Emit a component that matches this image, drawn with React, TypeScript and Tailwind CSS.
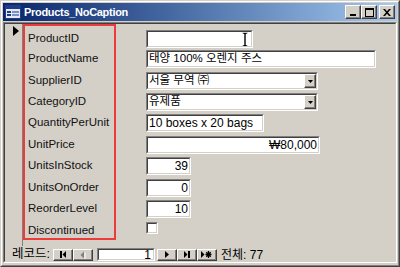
import React from "react";

const raised =
  "border border-t-white border-l-white border-r-[#404040] border-b-[#404040] shadow-[inset_-1px_-1px_#808080] bg-[#d4d0c8]";

function Box({ w, children, right }: { w: string; children?: React.ReactNode; right?: boolean }) {
  return (
    <div className={`${w} h-[18px] bg-white border border-t-[#808080] border-l-[#808080] border-r-white border-b-white`}>
      <div
        className={`h-full w-full flex items-center border border-t-[#404040] border-l-[#404040] border-r-[#d4d0c8] border-b-[#d4d0c8] px-[1px] ${
          right ? "justify-end" : "justify-start"
        }`}
      >
        {children}
      </div>
    </div>
  );
}

function Combo({ text }: { text: string }) {
  return (
    <div className="w-[172px] h-[18px] bg-white border border-t-[#808080] border-l-[#808080] border-r-white border-b-white">
      <div className="h-full w-full flex items-center border border-t-[#404040] border-l-[#404040] border-r-[#d4d0c8] border-b-[#d4d0c8] pl-[1px]">
        <span className="flex-1 text-[11.5px]">{text}</span>
        <div className={`w-[12px] h-[14px] flex items-center justify-center ${raised}`}>
          <svg width="5" height="3" viewBox="0 0 5 3">
            <path d="M0 0h5L2.5 3z" fill="#000" />
          </svg>
        </div>
      </div>
    </div>
  );
}

function TitleIcon() {
  return (
    <svg width="16" height="14" viewBox="0 0 16 14">
      <rect x="0.5" y="0.5" width="15" height="13" fill="#e8e8f0" stroke="#1c3c8c" />
      <rect x="1" y="1" width="14" height="3" fill="#1c3c8c" />
      <rect x="2" y="6" width="4" height="2" fill="#1c3c8c" />
      <rect x="7" y="6" width="7" height="2" fill="#7890c8" />
      <rect x="2" y="9" width="4" height="2" fill="#1c3c8c" />
      <rect x="7" y="9" width="7" height="2" fill="#7890c8" />
    </svg>
  );
}

function TBtn({ children }: { children: React.ReactNode }) {
  return <div className={`w-[16px] h-[14px] flex items-center justify-center ${raised}`}>{children}</div>;
}

function NavBtn({ children }: { children: React.ReactNode }) {
  return <div className={`w-[20px] h-[12px] flex items-center justify-center ${raised}`}>{children}</div>;
}

const rows: { label: string; h: string; field: React.ReactNode }[] = [
  {
    label: "ProductID",
    h: "h-[20px]",
    field: (
      <Box w="w-[107px]" right>
        <svg width="6" height="15" viewBox="0 0 6 15" className="mr-[2px]">
          <path d="M0.5 0.5h5v1.5h-1.5v11h1.5v1.5h-5v-1.5h1.5v-11h-1.5z" fill="#000" stroke="#fff" strokeWidth="0.6" />
        </svg>
      </Box>
    ),
  },
  { label: "ProductName", h: "h-[22px]", field: <Box w="w-[230px]"><span className="text-[11.5px]">태양 100% 오렌지 주스</span></Box> },
  { label: "SupplierID", h: "h-[21px]", field: <Combo text="서울 무역 ㈜" /> },
  { label: "CategoryID", h: "h-[21px]", field: <Combo text="유제품" /> },
  { label: "QuantityPerUnit", h: "h-[22px]", field: <Box w="w-[118px]"><span>10 boxes x 20 bags</span></Box> },
  { label: "UnitPrice", h: "h-[21px]", field: <Box w="w-[174px]" right><span>₩80,000</span></Box> },
  { label: "UnitsInStock", h: "h-[22px]", field: <Box w="w-[45px]" right><span>39</span></Box> },
  { label: "UnitsOnOrder", h: "h-[21px]", field: <Box w="w-[45px]" right><span>0</span></Box> },
  { label: "ReorderLevel", h: "h-[22px]", field: <Box w="w-[45px]" right><span>10</span></Box> },
  {
    label: "Discontinued",
    h: "h-[20px]",
    field: (
      <div className="w-[12px] h-[12px] bg-white border border-t-[#808080] border-l-[#808080] border-r-white border-b-white">
        <div className="w-full h-full border border-t-[#404040] border-l-[#404040] border-r-[#d4d0c8] border-b-[#d4d0c8]" />
      </div>
    ),
  },
];

export default function App() {
  return (
    <div className="w-[400px] h-[267px] flex font-['Liberation_Sans','Noto_Sans_CJK_KR',sans-serif] text-black text-[12px] leading-none border border-t-[#d4d0c8] border-l-[#d4d0c8] border-r-[#404040] border-b-[#404040] bg-[#d4d0c8]">
      <div className="flex-1 flex border border-t-white border-l-white border-r-[#808080] border-b-[#808080]">
        <div className="flex-1 flex flex-col p-[1px] pb-[2px]">
          {/* title bar */}
          <div className="h-[18px] flex items-center bg-gradient-to-r from-[#0a246a] to-[#a6caf0] pl-[2px] pr-[2px]">
            <TitleIcon />
            <span className="ml-[3px] text-white font-bold text-[11px] tracking-[-0.3px]">Products_NoCaption</span>
            <div className="flex-1" />
            <TBtn>
              <svg width="8" height="8" viewBox="0 0 8 8">
                <rect x="1" y="6" width="6" height="2" fill="#000" />
              </svg>
            </TBtn>
            <TBtn>
              <svg width="9" height="9" viewBox="0 0 9 9">
                <path d="M0 0h9v9H0z M1 2v6h7V2z" fill="#000" fillRule="evenodd" />
              </svg>
            </TBtn>
            <div className="w-[2px]" />
            <TBtn>
              <svg width="8" height="7" viewBox="0 0 8 7">
                <path d="M0 0h2l2 2.2L6 0h2L5 3.5 8 7H6L4 4.8 2 7H0l3-3.5z" fill="#000" />
              </svg>
            </TBtn>
          </div>
          {/* client */}
          <div className="mt-[1px] flex-1 flex flex-col border border-t-[#808080] border-l-[#808080] border-r-white border-b-white">
            <div className="flex-1 flex flex-col border border-t-[#404040] border-l-[#404040] border-r-[#d4d0c8] border-b-[#d4d0c8]">
              <div className="h-[222px] flex">
                {/* record selector */}
                <div className="w-[18px] border-r border-r-[#808080] flex justify-center pt-[2px] pl-[5px]">
                  <svg width="6" height="10" viewBox="0 0 6 10">
                    <path d="M0 0l6 5-6 5z" fill="#000" />
                  </svg>
                </div>
                {/* detail */}
                <div className="relative flex-1 pt-[6px]">
                  <div className="grid grid-cols-[123px_1fr]">
                    {rows.map((r) => (
                      <React.Fragment key={r.label}>
                        <div className={`${r.h} pl-[5px]`}>
                          <div className="h-[18px] flex items-center text-[11.5px] text-[#111]">{r.label}</div>
                        </div>
                        <div className={`${r.h}`}>{r.field}</div>
                      </React.Fragment>
                    ))}
                  </div>
                  <div className="absolute left-0 top-0 w-[93px] h-[216px] border-2 border-[#ec3b3b]" />
                </div>
              </div>
              {/* nav bar */}
              <div className="flex-1 flex items-center pl-[7px] pt-[2px]">
                <span className="text-[12.5px] mr-[3px]">레코드:</span>
                <NavBtn>
                  <svg width="8" height="7" viewBox="0 0 8 7">
                    <rect x="1" y="0" width="2" height="7" fill="#000" />
                    <path d="M7 0v7L3.5 3.5z" fill="#000" />
                  </svg>
                </NavBtn>
                <NavBtn>
                  <svg width="6" height="8" viewBox="0 0 6 8">
                    <path d="M4 0.5v7L0.5 4z" fill="#808080" />
                    <path d="M5 1.5v7" stroke="#fff" strokeWidth="1" />
                  </svg>
                </NavBtn>
                <div className="ml-[4px] mr-[2px] w-[58px] h-[13px] bg-white border border-t-[#808080] border-l-[#808080] border-r-white border-b-white">
                  <div className="h-full flex items-center justify-end pr-[2px] border border-t-[#404040] border-l-[#404040] border-r-[#d4d0c8] border-b-[#d4d0c8]">
                    <span>1</span>
                  </div>
                </div>
                <NavBtn>
                  <svg width="4" height="7" viewBox="0 0 4 7">
                    <path d="M0 0v7L4 3.5z" fill="#000" />
                  </svg>
                </NavBtn>
                <NavBtn>
                  <svg width="8" height="7" viewBox="0 0 8 7">
                    <path d="M1 0v7L4.5 3.5z" fill="#000" />
                    <rect x="5" y="0" width="2" height="7" fill="#000" />
                  </svg>
                </NavBtn>
                <NavBtn>
                  <svg width="11" height="7" viewBox="0 0 11 7">
                    <path d="M0 0v7L3.5 3.5z" fill="#000" />
                    <path d="M7.5 0v7M4.5 3.5h6M5.3 1.2l4.4 4.6M9.7 1.2l-4.4 4.6" stroke="#000" strokeWidth="1.3" />
                  </svg>
                </NavBtn>
                <span className="ml-[4px] text-[12px]">전체: 77</span>
              </div>
            </div>
          </div>
        </div>
      </div>
    </div>
  );
}
